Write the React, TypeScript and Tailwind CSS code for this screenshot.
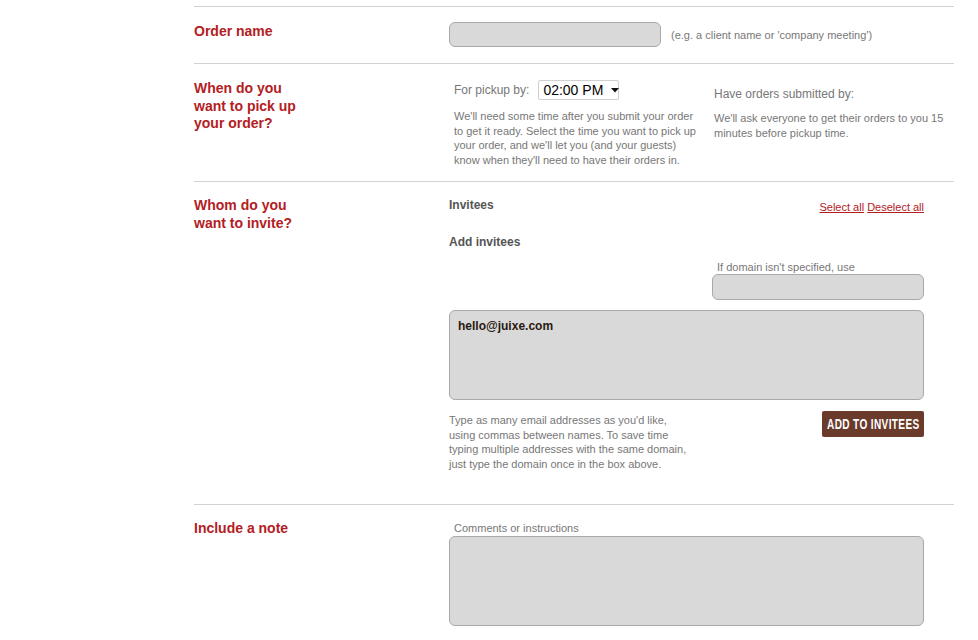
import React from "react";

const label = "text-[14px] font-bold leading-[17.5px] text-[#b3201f]";
const field = "bg-[#d9d9d9] border border-[#a9a9a9] rounded-[6px]";

export default function App() {
  return (
    <div className="min-h-[640px] bg-white" style={{ fontFamily: '"Liberation Sans", Arial, sans-serif' }}>
      <div className="ml-[194px] w-[760px] pt-[6px]">
        {/* Row 1 */}
        <div className="flex border-t border-[#d2d2d2] pt-[15px] pb-[16px]">
          <div className={`w-[255px] mt-[1px] ${label}`}>Order name</div>
          <div className="flex items-center">
            <div className={`w-[212px] h-[25px] ${field}`} />
            <span className="ml-[10px] mt-[2px] text-[11px] text-[#777] whitespace-nowrap">(e.g. a client name or 'company meeting')</span>
          </div>
        </div>

        {/* Row 2 */}
        <div className="flex border-t border-[#d2d2d2] pt-[16px] pb-[14px]">
          <div className={`w-[255px] ${label}`}>
            When do you
            <br />
            want to pick up
            <br />
            your order?
          </div>
          <div className="flex">
            <div className="ml-[5px] w-[245px]">
              <div className="flex items-center h-[20px]">
                <span className="text-[12px] text-[#777] whitespace-nowrap">For pickup by:</span>
                <div className="ml-[9px] flex items-center w-[81px] h-[20px] bg-white border border-[#d0d0d0] rounded-[2px] pl-[4px]">
                  <span className="text-[14px] text-black leading-none whitespace-nowrap">02:00 PM</span>
                  <svg className="ml-[8px] shrink-0" width="8" height="5" viewBox="0 0 8 5">
                    <path d="M0 0 L8 0 L4 4.5 Z" fill="#111" />
                  </svg>
                </div>
              </div>
              <p className="mt-[9px] text-[11px] leading-[14.5px] text-[#777]">
                We'll need some time after you submit your order to get it ready. Select the time you want to pick up
                your order, and we'll let you (and your guests) know when they'll need to have their orders in.
              </p>
            </div>
            <div className="ml-[15px] w-[240px]">
              <div className="mt-[6px] text-[12px] leading-[16px] text-[#777]">Have orders submitted by:</div>
              <p className="mt-[9px] text-[11px] leading-[14.5px] text-[#777]">
                We'll ask everyone to get their orders to you 15 minutes before pickup time.
              </p>
            </div>
          </div>
        </div>

        {/* Row 3 */}
        <div className="flex border-t border-[#d2d2d2] pt-[15px] pb-[33px]">
          <div className={`w-[255px] ${label}`}>
            Whom do you
            <br />
            want to invite?
          </div>
          <div className="w-[475px]">
            <div className="flex justify-between">
              <span className="text-[12px] font-bold leading-[16px] text-[#555]">Invitees</span>
              <span className="mt-[2px] text-[11px] leading-[16px] text-[#b3201f]">
                <span className="underline">Select all</span> <span className="underline">Deselect all</span>
              </span>
            </div>
            <div className="mt-[19px] text-[12px] font-bold leading-[16px] text-[#555]">Add invitees</div>
            <div className="mt-[10px] flex justify-end">
              <div className="w-[212px]">
                <div className="pl-[5px] text-[11px] leading-[14px] text-[#777]">If domain isn't specified, use</div>
                <div className={`h-[26px] ${field}`} />
              </div>
            </div>
            <div className={`mt-[10px] h-[90px] ${field} px-[8px] pt-[7px]`}>
              <div className="text-[12px] leading-[16px] font-bold text-[#2a1a12]">hello@juixe.com</div>
            </div>
            <div className="mt-[11px] flex justify-between items-start">
              <p className="mt-[2px] w-[245px] text-[11px] leading-[14.5px] text-[#777]">
                Type as many email addresses as you'd like, using commas between names. To save time typing multiple
                addresses with the same domain, just type the domain once in the box above.
              </p>
              <button className="w-[102px] h-[26px] bg-[#6a3a2a] rounded-[2px] flex items-center justify-center overflow-hidden">
                <span className="inline-block whitespace-nowrap text-white text-[14px] font-bold leading-none scale-x-[0.72] tracking-[0.5px]">
                  ADD TO INVITEES
                </span>
              </button>
            </div>
          </div>
        </div>

        {/* Row 4 */}
        <div className="flex border-t border-[#d2d2d2] pt-[15px] pb-[20px]">
          <div className={`w-[255px] ${label}`}>Include a note</div>
          <div className="w-[475px]">
            <div className="mt-[2px] pl-[5px] text-[11px] leading-[13px] text-[#777]">Comments or instructions</div>
            <div className={`mt-[1px] h-[90px] ${field}`} />
          </div>
        </div>
      </div>
    </div>
  );
}
